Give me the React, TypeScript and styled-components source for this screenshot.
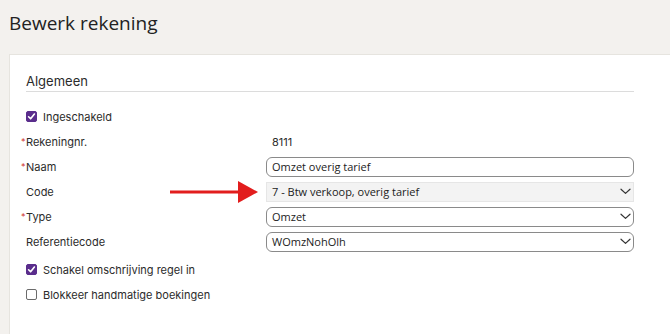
import React from 'react';
import { styled, createGlobalStyle } from 'styled-components';

const GlobalStyle = createGlobalStyle`
    html, body {
        margin: 0;
        padding: 0;
        background: #f3f1ee;
        font-family: Inter, "Open Sans", sans-serif;
        color: #2b2b2b;
        overflow: hidden;
    }
`

type FieldRow = {
    label: string,
    required?: boolean,
    kind: 'text' | 'static' | 'select' | 'readonly',
    value: string,
    arrow?: boolean
}

const fields: FieldRow[] = [
    { label: 'Rekeningnr.', required: true, kind: 'static', value: '8111' },
    { label: 'Naam', required: true, kind: 'text', value: 'Omzet overig tarief' },
    { label: 'Code', kind: 'readonly', value: '7 - Btw verkoop, overig tarief', arrow: true },
    { label: 'Type', required: true, kind: 'select', value: 'Omzet' },
    { label: 'Referentiecode', kind: 'select', value: 'WOmzNohOlh' },
];

const Chevron = () => (
    <svg width="11" height="7" viewBox="0 0 11 7">
        <path d="M1 1.2 L5.5 5.4 L10 1.2" fill="none" stroke="#333" strokeWidth="1.2" strokeLinecap="round" strokeLinejoin="round" />
    </svg>
);

const RedArrow = () => (
    <svg width="88" height="22" viewBox="0 0 88 22">
        <rect x="0" y="9.5" width="70" height="3" fill="#e21d1d" />
        <polygon points="68,0 88,11 68,22" fill="#e21d1d" />
    </svg>
);

const CheckBox = ({ checked }: { checked: boolean }) => (
    <Box $checked={checked}>
        {checked && (
            <svg width="9" height="9" viewBox="0 0 9 9">
                <path d="M1.6 4.8 L3.6 6.8 L7.4 2" fill="none" stroke="#fff" strokeWidth="1.6" strokeLinecap="round" strokeLinejoin="round" />
            </svg>
        )}
    </Box>
);

const App: React.FC = () => {
    return (
        <Page>
            <GlobalStyle />
            <Title>Bewerk rekening</Title>
            <Panel>
                <SectionTitle>Algemeen</SectionTitle>
                <Form>
                    <CheckRow>
                        <CheckBox checked={true} />
                        <span>Ingeschakeld</span>
                    </CheckRow>
                    {fields.map((f) => (
                        <Row key={f.label}>
                            <Label $required={!!f.required}>
                                <span>{f.label}</span>
                                {f.arrow && <ArrowWrap><RedArrow /></ArrowWrap>}
                            </Label>
                            {f.kind === 'static' && <StaticValue>{f.value}</StaticValue>}
                            {f.kind === 'text' && <Input>{f.value}</Input>}
                            {f.kind === 'select' && <Input>{f.value}<Chevron /></Input>}
                            {f.kind === 'readonly' && <ReadOnly>{f.value}<Chevron /></ReadOnly>}
                        </Row>
                    ))}
                    <CheckRow $spaced>
                        <CheckBox checked={true} />
                        <span>Schakel omschrijving regel in</span>
                    </CheckRow>
                    <CheckRow>
                        <CheckBox checked={false} />
                        <span>Blokkeer handmatige boekingen</span>
                    </CheckRow>
                </Form>
            </Panel>
        </Page>
    );
};

export default App;

const Page = styled.div`
    width: 670px;
    height: 334px;
    display: flex;
    flex-direction: column;
`
const Title = styled.h1`
    margin: 0;
    padding: 9px 0 0 9px;
    height: 54px;
    box-sizing: border-box;
    font-family: "Open Sans", sans-serif;
    font-weight: 400;
    font-size: 19px;
    line-height: 28px;
    color: #222;
`
const Panel = styled.div`
    flex: 1;
    margin-left: 9px;
    background: #fff;
    border-top: 1px solid #e6e4df;
    border-left: 1px solid #e6e4df;
    padding: 16px 36px 0 16px;
`
const SectionTitle = styled.div`
    font-family: Inter, sans-serif;
    font-size: 13px;
    line-height: 20px;
    color: #2b2b2b;
    border-bottom: 1px solid #dcdcdc;
    margin-bottom: 12px;
`
const Form = styled.div`
    display: flex;
    flex-direction: column;
`
const Row = styled.div`
    display: grid;
    grid-template-columns: 240px 1fr;
    align-items: center;
    height: 25px;
`
const Label = styled.div<{ $required: boolean }>`
    display: flex;
    align-items: center;
    color: #2b2b2b;
    font-size: 11px;

    &::before {
        content: '${({ $required }) => ($required ? '*' : '')}';
        color: #d0332b;
        font-size: 9px;
        width: 5px;
        margin-left: -5px;
    }
`
const ArrowWrap = styled.span`
    display: flex;
    margin-left: auto;
    margin-right: 8px;
`
const StaticValue = styled.div`
    padding-left: 6px;
    font-size: 11px;
    color: #2b2b2b;
`
const Input = styled.div`
    height: 20px;
    box-sizing: border-box;
    border: 1px solid #8a8a8a;
    border-radius: 6px;
    padding: 0 2px 0 5px;
    display: flex;
    align-items: center;
    justify-content: space-between;
    font-family: "Open Sans", sans-serif;
    font-size: 11px;
    color: #222;
`
const ReadOnly = styled(Input)`
    background: #f3f3f3;
    border: 1px solid #e6e6e6;
    border-radius: 0;
`
const CheckRow = styled.label<{ $spaced?: boolean }>`
    display: flex;
    align-items: center;
    gap: 6px;
    height: 25px;
    margin-top: ${({ $spaced }) => ($spaced ? '3px' : '0')};
    font-size: 11px;
    color: #2b2b2b;
`
const Box = styled.span<{ $checked: boolean }>`
    width: 11px;
    height: 11px;
    box-sizing: border-box;
    border-radius: 2px;
    display: flex;
    align-items: center;
    justify-content: center;
    background: ${({ $checked }) => ($checked ? '#5a2d8c' : '#fff')};
    border: 1px solid ${({ $checked }) => ($checked ? '#5a2d8c' : '#6b6b6b')};
`
